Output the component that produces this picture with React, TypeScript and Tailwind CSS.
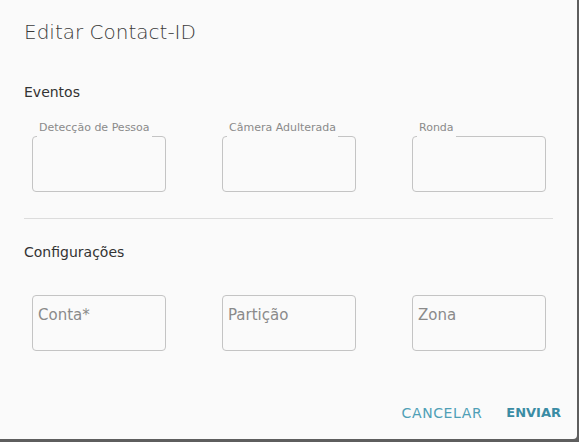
function Field({ label, placeholder }: { label?: string; placeholder?: string }) {
  return (
    <div className="relative h-[56px] w-[134px] rounded-[4px] border border-[#c4c4c4]">
      {label && (
        <span className="absolute left-[4px] top-[-16px] bg-[#fafafa] px-[2px] pb-[4px] text-[11px] leading-[14px] text-[#8a8a8a]">
          {label}
        </span>
      )}
      {placeholder && (
        <span className="absolute left-[5px] top-[9px] text-[15px] leading-5 text-[#8a8a8a]">{placeholder}</span>
      )}
    </div>
  );
}

export default function App() {
  return (
    <div className="h-[442px] w-[579px] bg-[#5e5e5e] font-['DejaVu_Sans',sans-serif]">
      <div className="flex h-[439px] w-[577px] flex-col rounded-br-[4px] bg-[#fafafa]">
        <h2 className="pl-6 pt-[20px] text-[20px] leading-6 font-light text-[#3a3a3a]">Editar Contact-ID</h2>

        <h3 className="mt-[38px] pl-6 text-[14px] leading-5 text-[#333]">Eventos</h3>
        <div className="mt-[34px] grid grid-cols-[134px_134px_134px] gap-x-[56px] pl-8">
          <Field label="Detecção de Pessoa" />
          <Field label="Câmera Adulterada" />
          <Field label="Ronda" />
        </div>

        <div className="mx-6 mt-[26px] border-t border-[#dcdcdc]" />

        <h3 className="mt-[23px] pl-6 text-[14px] leading-5 text-[#333]">Configurações</h3>
        <div className="mt-[33px] grid grid-cols-[134px_134px_134px] gap-x-[56px] pl-8">
          <Field placeholder="Conta*" />
          <Field placeholder="Partição" />
          <Field placeholder="Zona" />
        </div>

        <div className="mt-auto flex items-center justify-end gap-6 pb-[16px] pr-4">
          <button className="text-[14px] leading-5 tracking-[0.6px] text-[#4f9fb6]">CANCELAR</button>
          <button className="text-[13px] leading-5 font-bold text-[#3a8ca4]">ENVIAR</button>
        </div>
      </div>
    </div>
  );
}
